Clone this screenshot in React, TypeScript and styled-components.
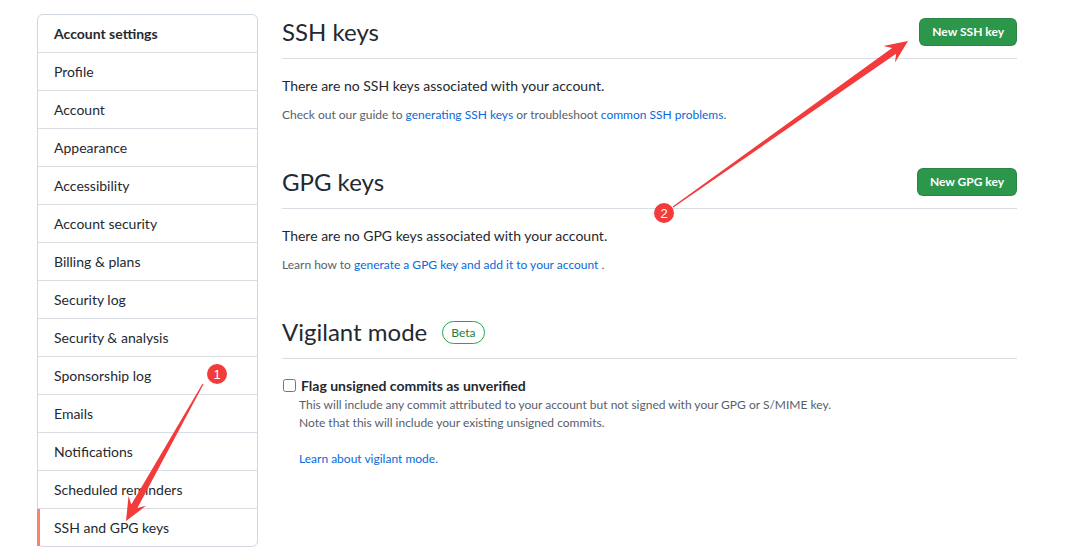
import React from 'react';
import styled, { createGlobalStyle } from 'styled-components';

const GlobalStyle = createGlobalStyle`
	html, body {
		margin: 0;
		padding: 0;
		background: #ffffff;
	}
	body {
		font-family: Lato, "Liberation Sans", Arial, sans-serif;
		color: #24292f;
		font-size: 14px;
	}
	* {
		box-sizing: border-box;
	}
`;

const Page = styled.div`
	position: relative;
	display: flex;
	align-items: flex-start;
	gap: 24px;
	padding: 14px 0 0 37px;
	width: 1017px;
`;

const Menu = styled.nav`
	width: 221px;
	flex-shrink: 0;
	border: 1px solid #d0d7de;
	border-radius: 6px;
	background: #fff;
`;

const MenuHeading = styled.div`
	padding: 8px 16px;
	line-height: 21px;
	font-weight: 700;
	font-size: 14px;
	border-bottom: 1px solid #d8dee4;
`;

const MenuItem = styled.a<{ $selected?: boolean }>`
	position: relative;
	display: block;
	padding: 8px 16px;
	line-height: 21px;
	color: #24292f;
	text-decoration: none;
	border-bottom: 1px solid #d8dee4;

	&:last-child {
		border-bottom: none;
	}

	&::before {
		content: '';
		display: ${({ $selected }) => ($selected ? 'block' : 'none')};
		position: absolute;
		left: -1px;
		top: 0;
		bottom: 0;
		width: 3px;
		background: #f9826c;
	}
`;

const Main = styled.main`
	flex: 1;
	min-width: 0;
`;

const Subhead = styled.div<{ $spaced?: boolean }>`
	display: flex;
	align-items: center;
	padding-bottom: 8px;
	margin-top: ${({ $spaced }) => ($spaced ? '40px' : '0')};
	margin-bottom: 16px;
	border-bottom: 1px solid #d8dee4;
`;

const Heading = styled.h2`
	flex: 1;
	margin: 0;
	font-size: 24px;
	font-weight: 400;
	line-height: 36px;
	display: flex;
	align-items: center;
`;

const Label = styled.span`
	margin-left: 15px;
	padding: 0 8px;
	border: 1px solid #2da44e;
	border-radius: 2em;
	font-size: 12px;
	line-height: 21px;
	color: #1a7f37;
`;

const GreenButton = styled.button`
	font-family: inherit;
	font-size: 12px;
	font-weight: 700;
	line-height: 20px;
	padding: 3px 12px;
	color: #fff;
	background: #2c974b;
	border: 1px solid rgba(27, 31, 36, 0.15);
	border-radius: 6px;
	cursor: pointer;
`;

const Blank = styled.p`
	margin: 0 0 10px;
	line-height: 21px;
`;

const Note = styled.p`
	margin: 0;
	font-size: 12px;
	line-height: 18px;
	color: #57606a;
`;

const Link = styled.a`
	color: #0969da;
	text-decoration: none;
`;

const CheckRow = styled.label`
	display: flex;
	align-items: center;
	gap: 5px;
	font-weight: 700;
	line-height: 21px;
`;

const Check = styled.input`
	width: 13px;
	height: 13px;
	margin: 0 0 0 1px;
`;

const CheckNote = styled.div`
	padding-left: 17px;
`;

const LearnMore = styled(Note)`
	margin-top: 18px;
`;

const Overlay = styled.svg`
	position: absolute;
	left: 0;
	top: 0;
	pointer-events: none;
`;

type Pt = [number, number];

const arrowPoints = (tail: Pt, tip: Pt) => {
	const dx = tip[0] - tail[0];
	const dy = tip[1] - tail[1];
	const len = Math.hypot(dx, dy);
	const ux = dx / len;
	const uy = dy / len;
	const nx = -uy;
	const ny = ux;
	const at = (d: number, w: number): string =>
		`${tip[0] - ux * d + nx * w},${tip[1] - uy * d + ny * w}`;
	return [
		at(len, 0.6),
		at(17, 3.5),
		at(23, 10),
		at(0, 0),
		at(23, -10),
		at(17, -3.5),
		at(len, -0.6),
	].join(' ');
};

const Badge = ({ x, y, n }: { x: number; y: number; n: number }) => (
	<g>
		<circle cx={x} cy={y} r={10} fill="#f33b3b" />
		<text
			x={x}
			y={y + 4.5}
			textAnchor="middle"
			fontSize="13"
			fontFamily="Liberation Sans, Arial, sans-serif"
			fill="#fff"
		>
			{n}
		</text>
	</g>
);

const menu = [
	'Profile',
	'Account',
	'Appearance',
	'Accessibility',
	'Account security',
	'Billing & plans',
	'Security log',
	'Security & analysis',
	'Sponsorship log',
	'Emails',
	'Notifications',
	'Scheduled reminders',
	'SSH and GPG keys',
];

export default function App() {
	return (
		<>
			<GlobalStyle />
			<Page>
				<Menu>
					<MenuHeading>Account settings</MenuHeading>
					{menu.map((item) => (
						<MenuItem key={item} $selected={item === 'SSH and GPG keys'}>
							{item}
						</MenuItem>
					))}
				</Menu>

				<Main>
					<Subhead>
						<Heading>SSH keys</Heading>
						<GreenButton>New SSH key</GreenButton>
					</Subhead>
					<Blank>There are no SSH keys associated with your account.</Blank>
					<Note>
						Check out our guide to <Link>generating SSH keys</Link> or troubleshoot{' '}
						<Link>common SSH problems</Link>.
					</Note>

					<Subhead $spaced>
						<Heading>GPG keys</Heading>
						<GreenButton>New GPG key</GreenButton>
					</Subhead>
					<Blank>There are no GPG keys associated with your account.</Blank>
					<Note>
						Learn how to <Link>generate a GPG key and add it to your account</Link> .
					</Note>

					<Subhead $spaced>
						<Heading>
							Vigilant mode <Label>Beta</Label>
						</Heading>
					</Subhead>
					<CheckRow>
						<Check type="checkbox" />
						Flag unsigned commits as unverified
					</CheckRow>
					<CheckNote>
						<Note>
							This will include any commit attributed to your account but not signed with
							your GPG or S/MIME key.
						</Note>
						<Note>Note that this will include your existing unsigned commits.</Note>
						<LearnMore>
							<Link>Learn about vigilant mode.</Link>
						</LearnMore>
					</CheckNote>
				</Main>

				<Overlay width={1084} height={550} viewBox="0 0 1084 550">
					<polygon points={arrowPoints([203, 384], [126, 521])} fill="#f33b3b" />
					<polygon points={arrowPoints([673, 207], [908, 41])} fill="#f33b3b" />
					<Badge x={217} y={374} n={1} />
					<Badge x={664} y={213} n={2} />
				</Overlay>
			</Page>
		</>
	);
}
